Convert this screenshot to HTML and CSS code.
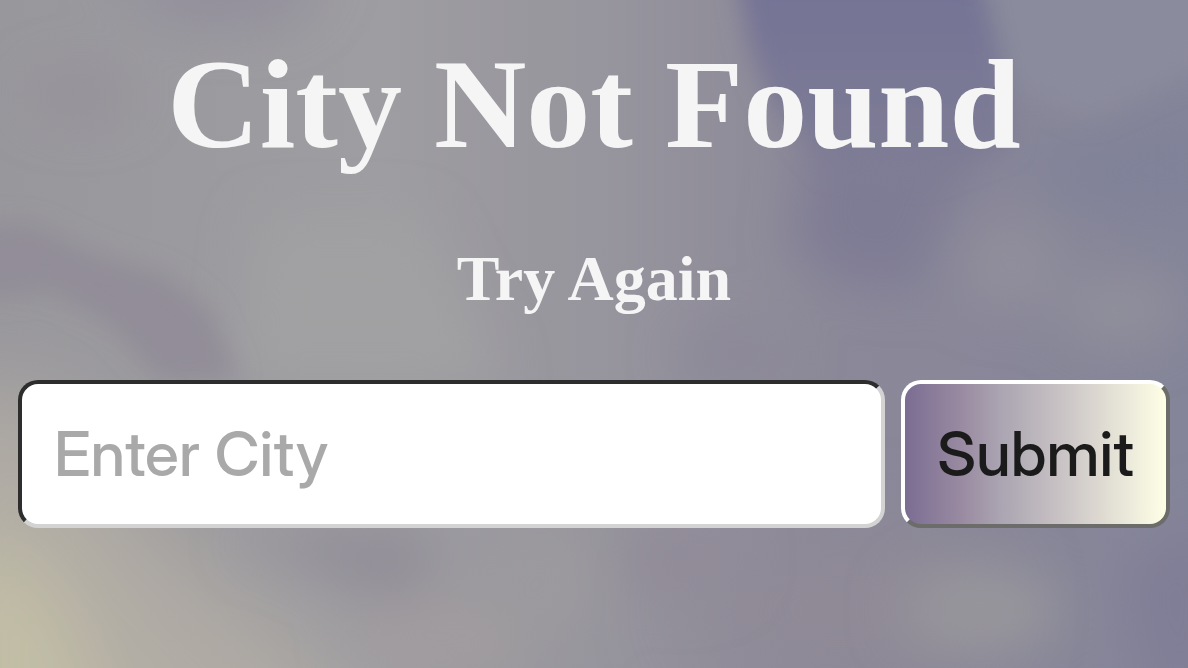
FILE: index.html
```html
<!DOCTYPE html>
<html lang="en">
<head>
<meta charset="utf-8">
<meta name="viewport" content="width=device-width, initial-scale=1">
<title>City Not Found</title>
<link rel="stylesheet" href="styles.css">
</head>
<body>
<svg class="sky" viewBox="0 0 1188 668" preserveAspectRatio="none" aria-hidden="true">
  <defs>
    <linearGradient id="base" x1="0" y1="0" x2="1" y2="0">
      <stop offset="0" stop-color="#98979c"/>
      <stop offset="0.32" stop-color="#9e9da1"/>
      <stop offset="0.5" stop-color="#97959d"/>
      <stop offset="0.7" stop-color="#8b8898"/>
      <stop offset="1" stop-color="#858599"/>
    </linearGradient>
    <linearGradient id="violet" x1="0" y1="0" x2="0" y2="1">
      <stop offset="0" stop-color="#747295"/>
      <stop offset="0.6" stop-color="#7a7995"/>
      <stop offset="1" stop-color="#807d95"/>
    </linearGradient>
    <filter id="soft" x="-50%" y="-50%" width="200%" height="200%"><feGaussianBlur stdDeviation="12"/></filter>
    <filter id="softer" x="-80%" y="-80%" width="260%" height="260%"><feGaussianBlur stdDeviation="26"/></filter>
    <filter id="haze" x="-100%" y="-100%" width="300%" height="300%"><feGaussianBlur stdDeviation="45"/></filter>
  </defs>
  <rect width="1188" height="668" fill="url(#base)"/>
  <g filter="url(#haze)">
    <path fill="#b0aba4" d="M-80 380 L60 400 L160 530 L300 650 L420 780 L-80 780Z"/>
    <path fill="#c3bfa6" d="M-80 520 L50 570 L130 780 L-80 780Z"/>
    <ellipse cx="840" cy="610" rx="150" ry="70" fill="#908a96"/>
  </g>
  <g filter="url(#softer)">
    <path fill="#918d9b" d="M100 -30 H330 L290 20 L180 25Z"/>
    <ellipse cx="80" cy="95" rx="50" ry="22" fill="#949199"/>
    <path fill="#928e98" d="M230 540 L420 520 L440 590 L370 600 L300 560Z"/>
    <ellipse cx="440" cy="640" rx="90" ry="40" fill="#a19c9f"/>
    <ellipse cx="540" cy="580" rx="60" ry="60" fill="#9b9a9e"/>
    <ellipse cx="680" cy="560" rx="60" ry="35" fill="#918b98"/>
    <ellipse cx="980" cy="610" rx="80" ry="45" fill="#97959b"/>
    <ellipse cx="1010" cy="265" rx="50" ry="45" fill="#918f9b"/>
    <ellipse cx="1120" cy="310" rx="60" ry="35" fill="#91909b"/>
    <path fill="#807e96" d="M1120 570 L1220 500 V700 H1150Z"/>
    <path fill="#7e7b94" d="M800 130 L1000 120 L950 210 L920 290 L840 280 L790 240 L810 180Z"/>
    <path fill="#808299" d="M1010 160 L1210 110 V220 L1090 210Z"/>
    <path fill="#a1a1a3" d="M260 220 H420 L500 380 H240Z"/>
    <ellipse cx="735" cy="355" rx="55" ry="28" fill="#8b8798"/>
  </g>
  <g filter="url(#soft)">
    <path fill="url(#violet)" d="M735 -30 H978 L1000 50 L1012 145 L920 180 L830 170 L770 100 L750 50Z"/>
    <path fill="#928d98" d="M-30 222 L35 225 L95 254 L165 275 L210 310 L238 380 L160 380 L110 325 L50 290 L-30 300Z"/>
    <path fill="#8a8b9c" d="M982 -30 H1220 V60 L1090 120 L1010 85Z"/>
  </g>
</svg>
<main class="page">
  <h1 class="title">City Not Found</h1>
  <h2 class="subtitle">Try Again</h2>
  <form class="search">
    <input class="search-input" type="text" name="city" placeholder="Enter City" aria-label="City">
    <button class="search-button" type="submit">Submit</button>
  </form>
</main>
</body>
</html>
```
FILE: styles.css
```css
* {
  box-sizing: border-box;
}

body {
  margin: 0;
  min-height: 100vh;
  background: #93919c;
  color: whitesmoke;
  font-family: "Liberation Serif", "Times New Roman", serif;
}

.sky {
  position: fixed;
  inset: 0;
  z-index: -1;
  width: 100%;
  height: 100%;
}

.page {
  display: flex;
  flex-direction: column;
  gap: 64px;
  padding: 30px 18px;
  text-align: center;
}

.title,
.subtitle {
  margin: 0;
  font-weight: 700;
}

.title {
  font-size: 128px;
  line-height: 148px;
}

.subtitle {
  font-size: 64px;
  line-height: 74px;
}

.search {
  display: flex;
  gap: 16px;
}

.search-input,
.search-button {
  padding: 32px;
  border-width: 4px;
  border-style: solid;
  border-radius: 20px;
  font-family: "Inter Display", Inter, "Liberation Sans", sans-serif;
  font-size: 62px;
  font-weight: 460;
  font-variation-settings: "opsz" 32;
  line-height: 76px;
}

.search-input {
  flex: 1;
  min-width: 0;
  border-color: #2d2d2d #d3d3d3 #d3d3d3 #2d2d2d;
  background: #fff;
  color: #1c1b1d;
}

.search-input::placeholder {
  color: #a9a9a9;
  opacity: 1;
}

.search-button {
  border-color: #fff #6c6c6a #6c6c6a #fff;
  background: linear-gradient(to right, #7b6d92, #9a8ba2 22%, #aaa3b1 36%, #c9c3c5 60%, #ffffe6);
  color: #1c1b1c;
}
```
